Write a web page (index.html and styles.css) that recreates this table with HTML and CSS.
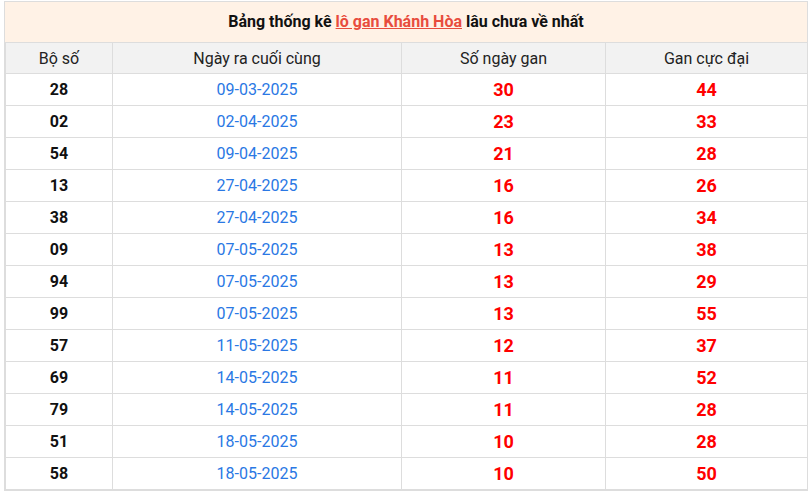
FILE: index.html
```html
<!DOCTYPE html>
<html lang="vi">
<head>
<meta charset="utf-8">
<title>Lô gan Khánh Hòa</title>
<link rel="stylesheet" href="styles.css">
</head>
<body>
<div class="box">
  <div class="title">Bảng thống kê <a href="#" class="title-link">lô gan Khánh Hòa</a> lâu chưa về nhất</div>
  <table class="stats">
    <colgroup>
      <col class="c1"><col class="c2"><col class="c3"><col class="c4">
    </colgroup>
    <thead>
      <tr><th>Bộ số</th><th>Ngày ra cuối cùng</th><th>Số ngày gan</th><th>Gan cực đại</th></tr>
    </thead>
    <tbody>
      <tr><td class="num">28</td><td class="date">09-03-2025</td><td class="red">30</td><td class="red">44</td></tr>
      <tr><td class="num">02</td><td class="date">02-04-2025</td><td class="red">23</td><td class="red">33</td></tr>
      <tr><td class="num">54</td><td class="date">09-04-2025</td><td class="red">21</td><td class="red">28</td></tr>
      <tr><td class="num">13</td><td class="date">27-04-2025</td><td class="red">16</td><td class="red">26</td></tr>
      <tr><td class="num">38</td><td class="date">27-04-2025</td><td class="red">16</td><td class="red">34</td></tr>
      <tr><td class="num">09</td><td class="date">07-05-2025</td><td class="red">13</td><td class="red">38</td></tr>
      <tr><td class="num">94</td><td class="date">07-05-2025</td><td class="red">13</td><td class="red">29</td></tr>
      <tr><td class="num">99</td><td class="date">07-05-2025</td><td class="red">13</td><td class="red">55</td></tr>
      <tr><td class="num">57</td><td class="date">11-05-2025</td><td class="red">12</td><td class="red">37</td></tr>
      <tr><td class="num">69</td><td class="date">14-05-2025</td><td class="red">11</td><td class="red">52</td></tr>
      <tr><td class="num">79</td><td class="date">14-05-2025</td><td class="red">11</td><td class="red">28</td></tr>
      <tr><td class="num">51</td><td class="date">18-05-2025</td><td class="red">10</td><td class="red">28</td></tr>
      <tr><td class="num">58</td><td class="date">18-05-2025</td><td class="red">10</td><td class="red">50</td></tr>
    </tbody>
  </table>
</div>
</body>
</html>
```

FILE: styles.css
```css
html, body {
  margin: 0;
  padding: 0;
  background: #fff;
}
body {
  font-family: Roboto, "Liberation Sans", Arial, sans-serif;
  color: #222;
}
.box {
  margin: 1px 1px 0 4px;
  border: 1px solid #ddd;
  box-sizing: border-box;
  width: 804px;
}
.title {
  height: 40px;
  box-sizing: border-box;
  background: #fff2e6;
  text-align: center;
  font-weight: bold;
  font-size: 16px;
  line-height: 40px;
  color: #111;
}
.title-link {
  color: #e84c3d;
  text-decoration: underline;
}
.stats {
  width: 100%;
  border-collapse: collapse;
  table-layout: fixed;
}
.c1 { width: 107px; }
.c2 { width: 289px; }
.c3 { width: 204px; }
.c4 { width: 202px; }
.stats th,
.stats td {
  border: 1px solid #ddd;
  text-align: center;
  padding: 0;
}
.stats th {
  background: #f2f2f2;
  font-weight: normal;
  font-size: 16px;
  height: 30px;
  color: #222;
}
.stats td {
  height: 31px;
  font-size: 16px;
}
.num {
  font-weight: bold;
  color: #111;
}
.date {
  color: #2a78e4;
}
.red {
  color: #ff0000;
  font-weight: bold;
  font-size: 18px !important;
}
```
